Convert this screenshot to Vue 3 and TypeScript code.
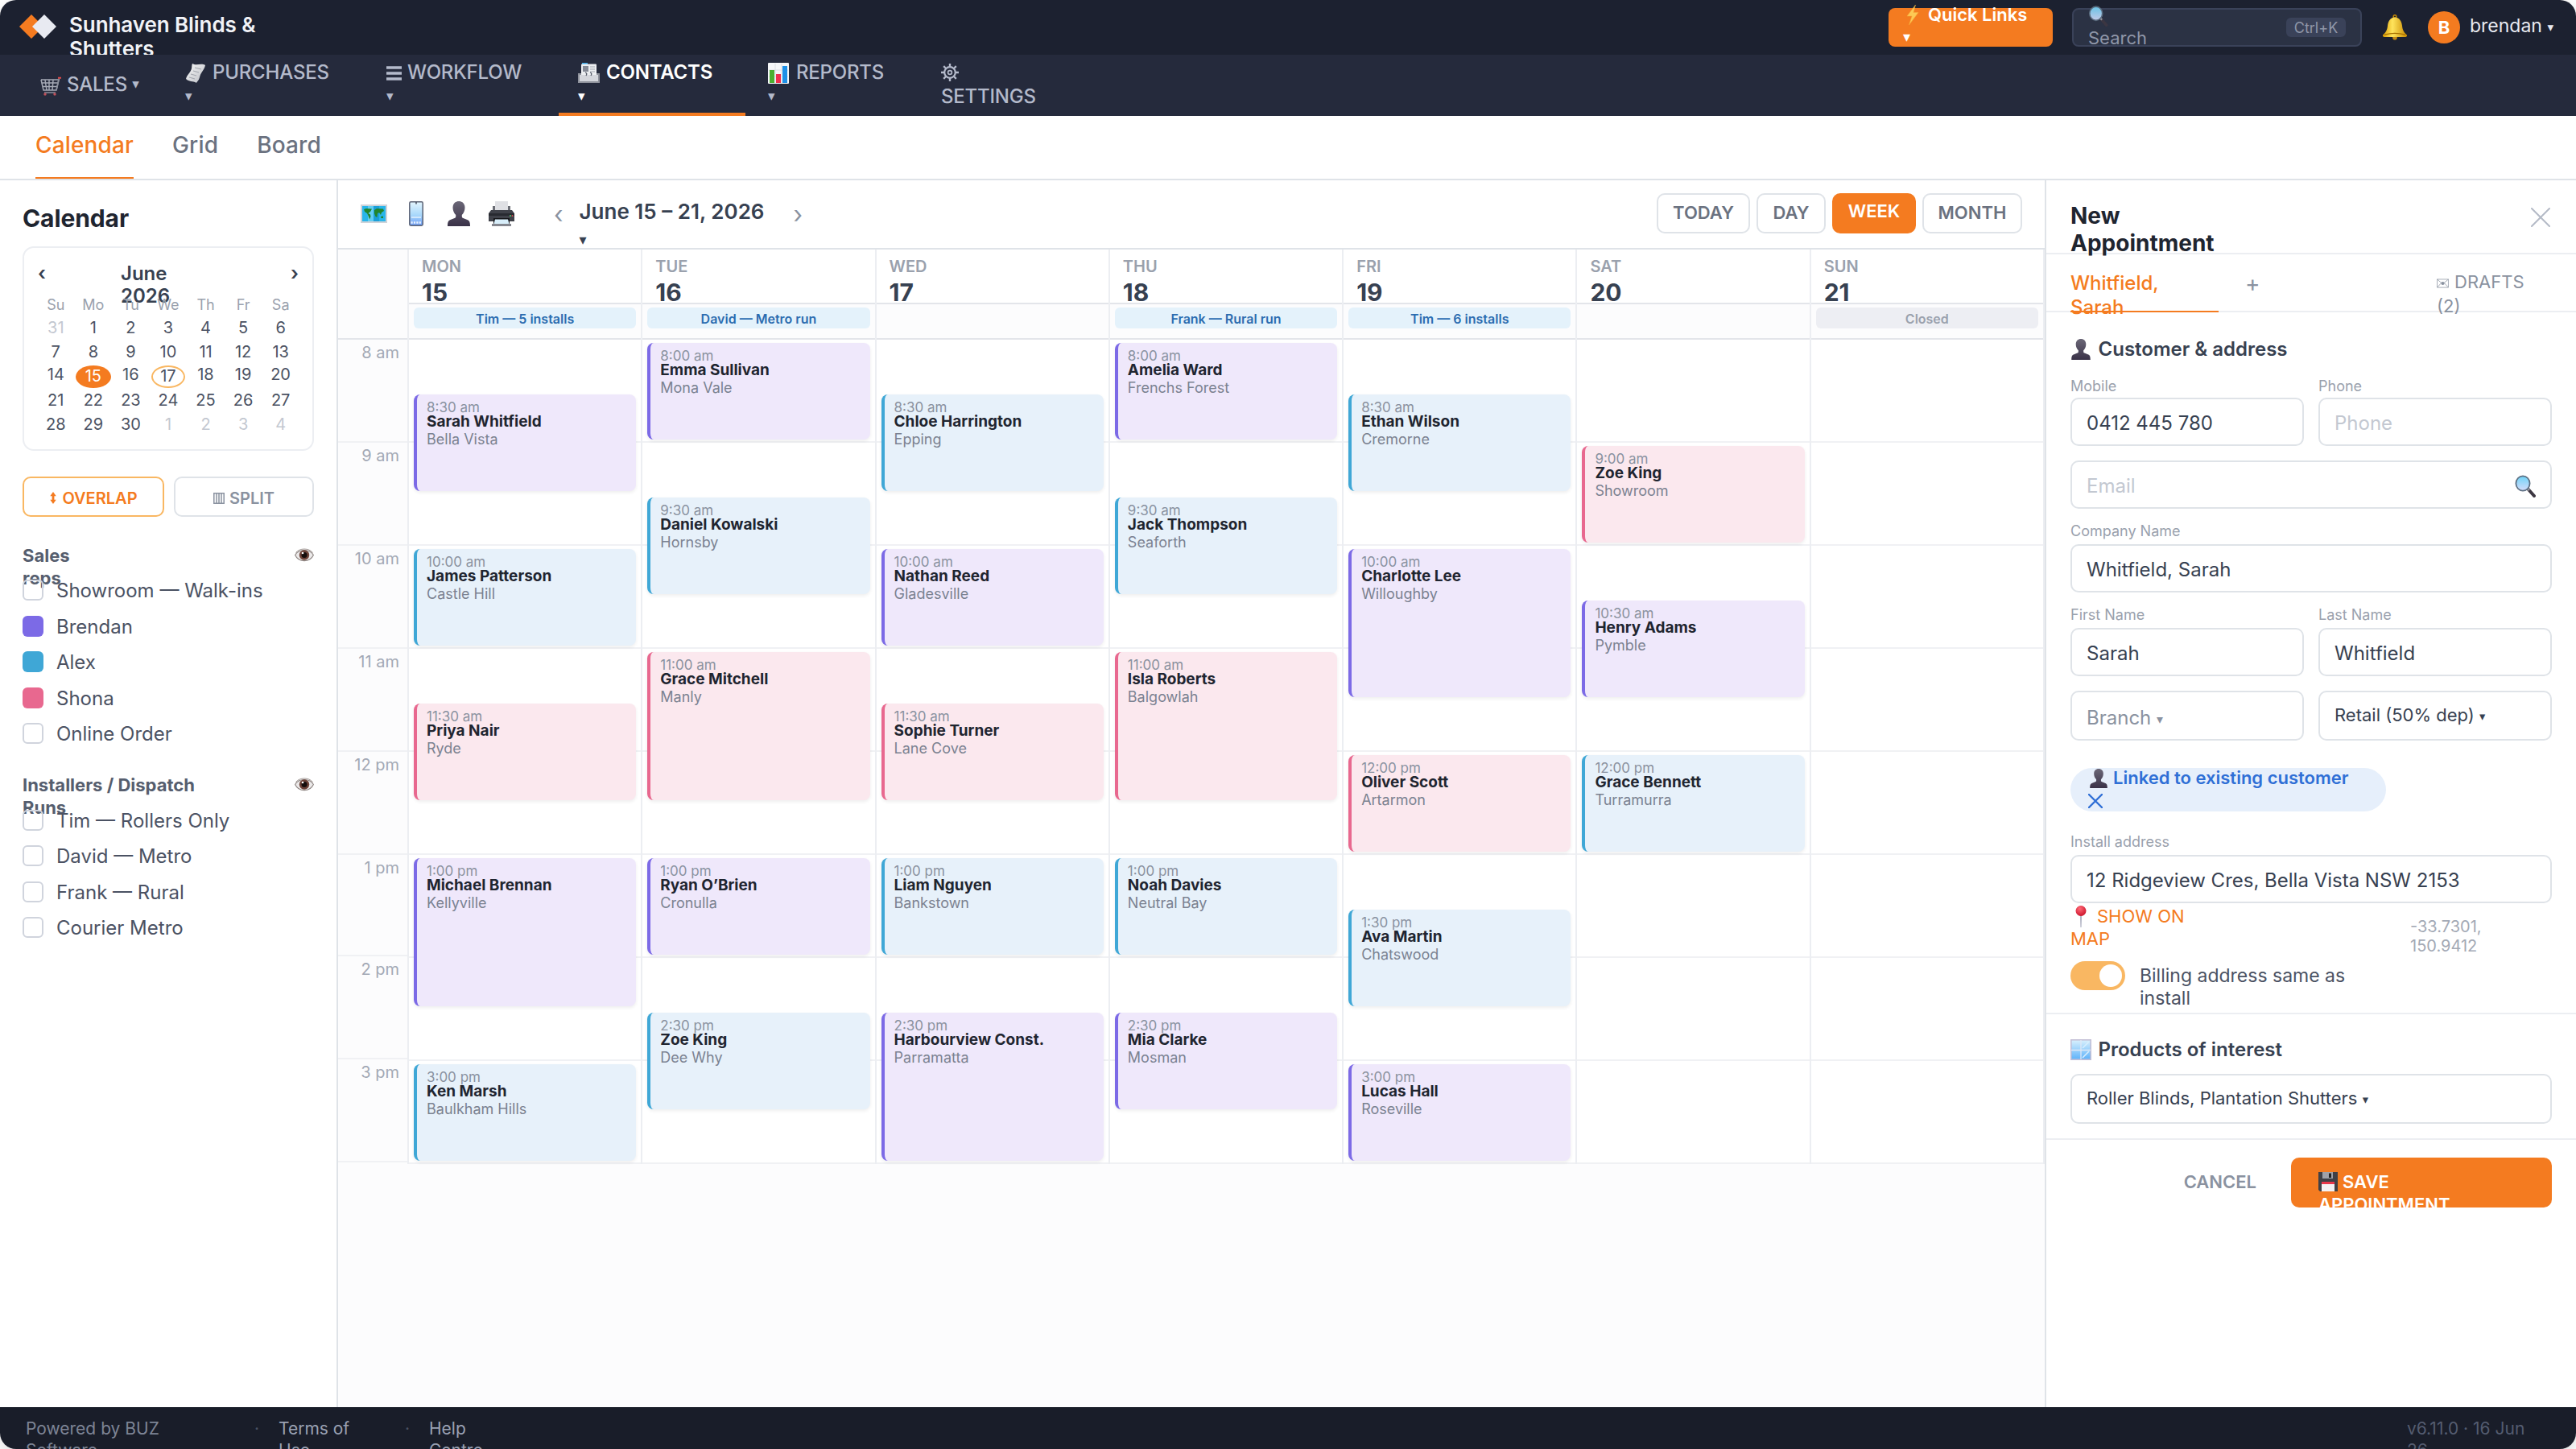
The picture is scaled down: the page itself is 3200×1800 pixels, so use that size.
<script setup lang="ts">
interface NavItem { key: string; icon: string; label: string; stacked?: boolean; active?: boolean }
interface Person { name: string; tone?: string }
interface Appt { start: number; hours: number; tone: string; name: string; place: string }
interface Day { dow: string; date: number; note?: string; closed?: boolean; appts: Appt[] }

const nav: NavItem[] = [
  { key: 'sales', icon: 'cart', label: 'SALES' },
  { key: 'purchases', icon: 'receipt', label: 'PURCHASES', stacked: true },
  { key: 'workflow', icon: 'menu', label: 'WORKFLOW', stacked: true },
  { key: 'contacts', icon: 'cards', label: 'CONTACTS', stacked: true, active: true },
  { key: 'reports', icon: 'chart', label: 'REPORTS', stacked: true },
  { key: 'settings', icon: 'gear', label: 'SETTINGS', stacked: true },
]

const weekdays = ['Su', 'Mo', 'Tu', 'We', 'Th', 'Fr', 'Sa']
const weeks: number[][] = [
  [31, 1, 2, 3, 4, 5, 6],
  [7, 8, 9, 10, 11, 12, 13],
  [14, 15, 16, 17, 18, 19, 20],
  [21, 22, 23, 24, 25, 26, 27],
  [28, 29, 30, 1, 2, 3, 4],
]
const dayClass = (w: number, d: number) => ({
  muted: (w === 0 && d > 20) || (w === 4 && d < 10),
  selected: d === 15,
  today: d === 17,
})

const reps: Person[] = [
  { name: 'Showroom — Walk-ins' },
  { name: 'Brendan', tone: 'purple' },
  { name: 'Alex', tone: 'blue' },
  { name: 'Shona', tone: 'pink' },
  { name: 'Online Order' },
]
const runs: Person[] = [
  { name: 'Tim — Rollers Only' },
  { name: 'David — Metro' },
  { name: 'Frank — Rural' },
  { name: 'Courier Metro' },
]

const hours = ['8 am', '9 am', '10 am', '11 am', '12 pm', '1 pm', '2 pm', '3 pm']
const a = (start: number, hours: number, tone: string, name: string, place: string): Appt => ({ start, hours, tone, name, place })
const days: Day[] = [
  { dow: 'MON', date: 15, note: 'Tim — 5 installs', appts: [
    a(8.5, 1, 'purple', 'Sarah Whitfield', 'Bella Vista'),
    a(10, 1, 'blue', 'James Patterson', 'Castle Hill'),
    a(11.5, 1, 'pink', 'Priya Nair', 'Ryde'),
    a(13, 1.5, 'purple', 'Michael Brennan', 'Kellyville'),
    a(15, 1, 'blue', 'Ken Marsh', 'Baulkham Hills'),
  ] },
  { dow: 'TUE', date: 16, note: 'David — Metro run', appts: [
    a(8, 1, 'purple', 'Emma Sullivan', 'Mona Vale'),
    a(9.5, 1, 'blue', 'Daniel Kowalski', 'Hornsby'),
    a(11, 1.5, 'pink', 'Grace Mitchell', 'Manly'),
    a(13, 1, 'purple', 'Ryan O’Brien', 'Cronulla'),
    a(14.5, 1, 'blue', 'Zoe King', 'Dee Why'),
  ] },
  { dow: 'WED', date: 17, appts: [
    a(8.5, 1, 'blue', 'Chloe Harrington', 'Epping'),
    a(10, 1, 'purple', 'Nathan Reed', 'Gladesville'),
    a(11.5, 1, 'pink', 'Sophie Turner', 'Lane Cove'),
    a(13, 1, 'blue', 'Liam Nguyen', 'Bankstown'),
    a(14.5, 1.5, 'purple', 'Harbourview Const.', 'Parramatta'),
  ] },
  { dow: 'THU', date: 18, note: 'Frank — Rural run', appts: [
    a(8, 1, 'purple', 'Amelia Ward', 'Frenchs Forest'),
    a(9.5, 1, 'blue', 'Jack Thompson', 'Seaforth'),
    a(11, 1.5, 'pink', 'Isla Roberts', 'Balgowlah'),
    a(13, 1, 'blue', 'Noah Davies', 'Neutral Bay'),
    a(14.5, 1, 'purple', 'Mia Clarke', 'Mosman'),
  ] },
  { dow: 'FRI', date: 19, note: 'Tim — 6 installs', appts: [
    a(8.5, 1, 'blue', 'Ethan Wilson', 'Cremorne'),
    a(10, 1.5, 'purple', 'Charlotte Lee', 'Willoughby'),
    a(12, 1, 'pink', 'Oliver Scott', 'Artarmon'),
    a(13.5, 1, 'blue', 'Ava Martin', 'Chatswood'),
    a(15, 1, 'purple', 'Lucas Hall', 'Roseville'),
  ] },
  { dow: 'SAT', date: 20, appts: [
    a(9, 1, 'pink', 'Zoe King', 'Showroom'),
    a(10.5, 1, 'purple', 'Henry Adams', 'Pymble'),
    a(12, 1, 'blue', 'Grace Bennett', 'Turramurra'),
  ] },
  { dow: 'SUN', date: 21, note: 'Closed', closed: true, appts: [] },
]

const HOUR = 128
const place = (e: Appt) => ({ top: `${(e.start - 8) * HOUR + 4}px`, height: `${e.hours * HOUR - 8}px` })
const clock = (t: number) => {
  const h = Math.floor(t)
  return `${h > 12 ? h - 12 : h}:${t % 1 ? '30' : '00'} ${h < 12 ? 'am' : 'pm'}`
}
</script>

<template>
  <div class="app">
    <svg class="sprite" width="0" height="0">
      <defs>
        <linearGradient id="g-bust" x1="0" y1="0" x2="0" y2="1"><stop offset="0" stop-color="#6b6777" /><stop offset="1" stop-color="#3a3248" /></linearGradient>
        <linearGradient id="g-phone" x1="0" y1="0" x2="0" y2="1"><stop offset="0" stop-color="#e4f6fe" /><stop offset=".55" stop-color="#a9d8fb" /><stop offset="1" stop-color="#6f9df5" /></linearGradient>
        <linearGradient id="g-gold" x1="0" y1="0" x2="1" y2="0"><stop offset="0" stop-color="#d99a00" /><stop offset=".4" stop-color="#ffe45c" /><stop offset="1" stop-color="#c98a00" /></linearGradient>
        <linearGradient id="g-lens" x1="0" y1="0" x2="0" y2="1"><stop offset="0" stop-color="#6fd3f7" /><stop offset="1" stop-color="#d5dcfb" /></linearGradient>
        <linearGradient id="g-glass" x1="0" y1="0" x2="0" y2="1"><stop offset="0" stop-color="#d9f1fd" /><stop offset="1" stop-color="#5eb2fa" /></linearGradient>
        <linearGradient id="g-paper" x1="0" y1="0" x2="1" y2="1"><stop offset="0" stop-color="#fafafa" /><stop offset="1" stop-color="#b9bbc2" /></linearGradient>
        <radialGradient id="g-ball" cx=".4" cy=".3" r=".8"><stop offset="0" stop-color="#ff6a78" /><stop offset="1" stop-color="#c60a22" /></radialGradient>
      </defs>
      <symbol id="cart" viewBox="0 0 26 24">
        <path d="M1 4 4 17H20L23 3.500M2 8H22M3 12.500H21M6 4.500 8 17M11 4.500V17M16 4.500 15 17M1 4H22" fill="none" stroke="#a4a8b4" stroke-width="1.500" />
        <path d="M20 17 23.500 2.500" fill="none" stroke="#8c909d" stroke-width="1.600" /><path d="M22 1.800H26" stroke="#e04a4a" stroke-width="2" />
        <path d="M5 20H19" stroke="#8c909d" stroke-width="1.500" /><circle cx="6" cy="22" r="1.700" fill="#c0505a" /><circle cx="18" cy="22" r="1.700" fill="#c0505a" />
      </symbol>
      <symbol id="receipt" viewBox="0 0 26 26">
        <path d="M9 1C14 4 20 0 25 3 24 9 19 12 18 18 17 22 15 23 14 25 9 22 5 24 1 20 2 15 7 12 8 7 8.500 5 8 3 9 1Z" fill="url(#g-paper)" />
        <path d="M12 6 20 8M10 10 17 12M7 14 14 16M5 18 12 20" stroke="#a3a6ae" stroke-width="1.100" />
      </symbol>
      <symbol id="menu" viewBox="0 0 20 26"><path d="M0 6H19M0 13H19M0 20H19" stroke="currentColor" stroke-width="3.400" /></symbol>
      <symbol id="cards" viewBox="0 0 27 26">
        <path d="M5 0H12V3H5Z" fill="#3ea8e6" /><rect x="4" y="1.500" width="19" height="21" rx="1" fill="#eceef1" />
        <rect x="6" y="4" width="7" height="7" fill="#858a96" /><path d="M15 5H21M15 8H21M15 11H21" stroke="#a2a6b0" stroke-width="1.200" />
        <path d="M0 13H4V22H23V13H27V25H0Z" fill="#8f929c" /><rect x="2" y="15" width="23" height="8" fill="#d4d6dc" />
        <path d="M9 12q3 1 1 4M15 12q3 1 1 4" fill="none" stroke="#555a68" stroke-width="1.300" />
      </symbol>
      <symbol id="chart" viewBox="0 0 26 26">
        <rect width="26" height="26" rx="1" fill="#f5f6f8" /><path d="M9 1V25M17 1V25M1 9H25M1 17H25" stroke="#dcdfe4" />
        <rect x="2" y="9" width="6" height="16" fill="#4caf2f" /><rect x="10" y="14" width="6" height="11" fill="#f0304f" /><rect x="18" y="4" width="6" height="21" fill="#1e90e8" />
      </symbol>
      <symbol id="gear" viewBox="0 0 22 22">
        <circle cx="11" cy="11" r="6.800" fill="none" stroke="currentColor" stroke-width="2.200" /><circle cx="11" cy="11" r="2.400" fill="none" stroke="currentColor" stroke-width="1.700" />
        <path d="M11 0V4M11 18V22M0 11H4M18 11H22M3.200 3.200 6 6M16 16 18.800 18.800M18.800 3.200 16 6M6 16 3.200 18.800" stroke="currentColor" stroke-width="2.400" />
      </symbol>
      <symbol id="bolt" viewBox="0 0 16 25"><path d="M11.500 0 1 14H7L3.500 25 15 9.500H9Z" fill="#ffd65e" stroke="#f9b23c" stroke-width=".6" /></symbol>
      <symbol id="mag" viewBox="0 0 26 28">
        <path d="M16 17 24 26" stroke="#3d3742" stroke-width="4" stroke-linecap="round" /><path d="M14.500 15.500 18 19" stroke="#9a9da6" stroke-width="2.500" />
        <ellipse cx="10" cy="10.500" rx="8.600" ry="9.200" fill="url(#g-lens)" stroke="#5d6f82" stroke-width="1.800" />
      </symbol>
      <symbol id="bell" viewBox="0 0 32 32">
        <circle cx="16" cy="2.600" r="1.800" fill="none" stroke="#c98a00" stroke-width="1.500" /><circle cx="16" cy="28.800" r="2.800" fill="#c58a12" />
        <path d="M16 3.500C22 3.500 24.500 9 25 14 25.500 19 27 22 31 25.500 31.500 27.500 30 28 28 28H4C2 28 .5 27.500 1 25.500 5 22 6.500 19 7 14 7.500 9 10 3.500 16 3.500Z" fill="url(#g-gold)" />
        <path d="M3 25.200Q16 21.500 29 25.200" fill="none" stroke="#a87200" stroke-width="1.200" />
      </symbol>
      <symbol id="map" viewBox="0 0 33 23">
        <rect width="33" height="23" fill="#cfd3d9" /><rect x="2" y="2" width="29" height="19" fill="#29b5ea" /><path d="M9 2H16V21H9Z" fill="#63cdf3" /><path d="M16 2H23V21H16Z" fill="#1b9fd8" />
        <path d="M4 6 7 5 14 5.500 12 9 9.500 11 12 12.500 12.500 15 11 18.500 9.500 14 8 11 5 9ZM17 7 20 5 28 5.500 29 8 26 10 25 13 23 10 21 11 20.500 16 18.500 15 17 11ZM25 15 28 14.500 28 17 25.500 17Z" fill="#22852c" />
      </symbol>
      <symbol id="phone" viewBox="0 0 18 31">
        <rect x=".8" y=".8" width="16.400" height="29.400" rx="1.600" fill="url(#g-phone)" stroke="#5b6274" stroke-width="1.500" /><path d="M9 1V3.500" stroke="#434a5a" stroke-width="1.500" />
        <path d="M3 20H15" stroke="#e2f0fd" stroke-width="1.500" /><path d="M2.500 26.500H15.500" stroke="#e9f2fe" stroke-width="2.400" stroke-dasharray="2.200 1.200" />
      </symbol>
      <symbol id="bust" viewBox="0 0 28 31">
        <path d="M14 0C18.500 0 21.500 3 21.500 8 21.500 11.500 20 15 17.800 17V19C17.800 20 18.400 20.600 19.400 21L25 23.200C27.200 24.200 28 26 28 31H0C0 26 .8 24.200 3 23.200L8.600 21C9.600 20.600 10.200 20 10.200 19V17C8 15 6.500 11.500 6.500 8 6.500 3 9.500 0 14 0Z" fill="url(#g-bust)" />
      </symbol>
      <symbol id="printer" viewBox="0 0 32 31">
        <path d="M8 0H24V12H8Z" fill="#dfe0e4" /><path d="M5 6H8V13H5ZM24 6H27V13H24Z" fill="#6b6d75" /><path d="M3 11H29L32 15V25H0V15Z" fill="#3f4149" /><path d="M0 15H32V18H0Z" fill="#282a31" />
        <path d="M6 21H26V28H6Z" fill="#15161a" /><path d="M8 22.500H24L25.500 28H6.500Z" fill="#d8eefa" /><path d="M4 28H28V31H4Z" fill="#85878f" /><circle cx="27" cy="18" r="1" fill="#4fd06a" /><circle cx="29.500" cy="18" r="1" fill="#e05050" />
      </symbol>
      <symbol id="eye" viewBox="0 0 24 18">
        <path d="M.6 9.500C5 1.500 19 1.500 23.400 9.500 19 19 5 19 .6 9.500Z" fill="#eceaea" stroke="#8d8582" stroke-width="1.100" /><path d="M1.500 6.500C6 .5 18 .5 22.500 6.500" fill="none" stroke="#a39b98" stroke-width="1" />
        <circle cx="12" cy="9.500" r="6.200" fill="#6d4238" /><circle cx="12" cy="9.500" r="3.500" fill="#140c0b" /><circle cx="10" cy="7" r="1.300" fill="#fff" />
      </symbol>
      <symbol id="updown" viewBox="0 0 8 16"><path d="M4 0 8 5.500H5.500V10.500H8L4 16 0 10.500H2.500V5.500H0Z" fill="currentColor" /></symbol>
      <symbol id="split" viewBox="0 0 14 14"><path d="M.8 .8H13.200V13.200H.8ZM4 1V13M7 1V13M10 1V13" fill="none" stroke="currentColor" stroke-width="1.500" /></symbol>
      <symbol id="env" viewBox="0 0 16 12"><path d="M.6 .6H15.400V11.400H.6ZM.6 .6 8 7 15.400 .6M.6 11.400 6 5.500M15.400 11.400 10 5.500" fill="none" stroke="currentColor" stroke-width=".8" /><circle cx="8" cy="6" r="2.200" fill="currentColor" /></symbol>
      <symbol id="pin" viewBox="0 0 14 27"><path d="M5.800 11H8.200L7.600 27H6.400Z" fill="#b4b6c6" /><circle cx="7" cy="6.500" r="6.500" fill="url(#g-ball)" /></symbol>
      <symbol id="window" viewBox="0 0 26 26"><rect x=".8" y=".8" width="24.400" height="24.400" fill="url(#g-glass)" stroke="#c3bfd6" stroke-width="1.600" /><path d="M13 1V25M1 13.500H25" stroke="#dfe8f6" stroke-width="1.300" /><path d="M15 11 23 3M15 23 23 15" stroke="#d8effd" stroke-width="1.600" /></symbol>
      <symbol id="floppy" viewBox="0 0 24 24"><path d="M0 0H24V24H2L0 22Z" fill="#3f4046" /><rect x="5" y="0" width="13" height="8" fill="#9fa1a8" /><rect x="13" y="1.500" width="3" height="5.500" fill="#222" /><rect x="4" y="12" width="16" height="12" fill="#f3f1f3" /><rect x="4" y="12" width="16" height="3" fill="#e8374b" /></symbol>
    </svg>

    <header class="topbar">
      <svg class="logo" width="46" height="30" viewBox="0 0 46 30">
        <path d="M15 0 30 15 15 30 0 15Z" fill="#f47b20" />
        <path d="M31 0 46 15 31 30 16 15Z" fill="#e8eaf1" />
      </svg>
      <div class="brand">Sunhaven Blinds &amp;<br>Shutters</div>
      <div class="spacer"></div>
      <div class="quick">
        <span class="ql"><svg class="bolt"><use href="#bolt" /></svg>Quick Links</span>
        <span class="qc">▾</span>
      </div>
      <div class="search">
        <div class="search-text"><svg class="mag"><use href="#mag" /></svg><span>Search</span></div>
        <kbd>Ctrl+K</kbd>
      </div>
      <svg class="bell"><use href="#bell" /></svg>
      <div class="avatar">B</div>
      <div class="user">brendan <span class="car">▾</span></div>
    </header>

    <nav class="mainnav">
      <div v-for="n in nav" :key="n.key" class="nav-item" :class="[n.key, { active: n.active }]">
        <div>
          <svg class="ico" :class="n.icon"><use :href="'#' + n.icon" /></svg><br v-if="n.key === 'settings'">{{ n.label }}<template v-if="n.key !== 'settings'"><br v-if="n.stacked"><template v-else>&nbsp;</template><span class="car">▾</span></template>
        </div>
      </div>
    </nav>

    <div class="tabs">
      <div class="tab on">Calendar</div>
      <div class="tab">Grid</div>
      <div class="tab">Board</div>
    </div>

    <div class="body">
      <aside class="side">
        <h2>Calendar</h2>
        <div class="mini">
          <div class="mini-head">
            <span class="prev-m">‹</span>
            <span class="month">June<br>2026</span>
            <span class="next-m">›</span>
          </div>
          <div class="mini-row dows"><span v-for="d in weekdays" :key="d">{{ d }}</span></div>
          <div v-for="(w, i) in weeks" :key="i" class="mini-row" :class="'w' + i">
            <span v-for="d in w" :key="d" :class="dayClass(i, d)">{{ d }}</span>
          </div>
        </div>
        <div class="modes">
          <div class="mode on"><svg width="8" height="15"><use href="#updown" /></svg>OVERLAP</div>
          <div class="mode off"><svg width="14" height="14"><use href="#split" /></svg>SPLIT</div>
        </div>
        <div class="group-head"><span>Sales<br>reps</span><svg class="eye"><use href="#eye" /></svg></div>
        <div class="people">
          <div v-for="p in reps" :key="p.name" class="person"><i class="box" :class="p.tone"></i><span>{{ p.name }}</span></div>
        </div>
        <div class="group-head second"><span>Installers / Dispatch<br>Runs</span><svg class="eye"><use href="#eye" /></svg></div>
        <div class="people">
          <div v-for="p in runs" :key="p.name" class="person"><i class="box"></i><span>{{ p.name }}</span></div>
        </div>
      </aside>

      <main class="cal">
        <div class="toolbar">
          <div class="tools">
            <span><svg width="33" height="23"><use href="#map" /></svg></span>
            <span><svg width="18" height="31"><use href="#phone" /></svg></span>
            <span><svg width="28" height="31"><use href="#bust" /></svg></span>
            <span><svg width="32" height="31"><use href="#printer" /></svg></span>
          </div>
          <span class="arrow prev">‹</span>
          <div class="range">June 15 – 21, 2026<span class="car">▾</span></div>
          <span class="arrow">›</span>
          <div class="spacer"></div>
          <div class="views">
            <div class="view today-btn">TODAY</div>
            <div class="view day-btn">DAY</div>
            <div class="view week-btn">WEEK</div>
            <div class="view month-btn">MONTH</div>
          </div>
        </div>
        <div class="week">
          <div class="gutter">
            <div class="gutter-head"></div>
            <div v-for="(h, i) in hours" :key="h" class="hour" :class="{ short: i === 5 }">{{ h }}</div>
          </div>
          <div v-for="d in days" :key="d.date" class="day">
            <div class="day-head"><div class="dow">{{ d.dow }}</div><div class="date">{{ d.date }}</div></div>
            <div class="allday"><div v-if="d.note" class="note" :class="{ closed: d.closed }">{{ d.note }}</div></div>
            <div class="lane">
              <div v-for="h in hours" :key="h" class="slot"></div>
              <div v-for="e in d.appts" :key="e.start" class="appt" :class="e.tone" :style="place(e)">
                <div class="t">{{ clock(e.start) }}</div>
                <div class="n">{{ e.name }}</div>
                <div class="p">{{ e.place }}</div>
              </div>
            </div>
          </div>
        </div>
      </main>

      <section class="panel">
        <div class="p-head">
          <h2>New<br>Appointment</h2>
          <svg class="close" width="24" height="24" viewBox="0 0 24 24"><path d="M1 1 23 23M23 1 1 23" stroke="#b4bac6" stroke-width="2" stroke-linecap="round" /></svg>
        </div>
        <div class="p-tabs">
          <div class="p-tab">Whitfield,<br>Sarah</div>
          <div class="plus">+</div>
          <div class="drafts"><svg class="env"><use href="#env" /></svg>DRAFTS<br>(2)</div>
        </div>
        <div class="form">
          <h3><svg class="hi bustico"><use href="#bust" /></svg>Customer &amp; address</h3>
          <div class="pair first">
            <div><label>Mobile</label><div class="input">0412 445 780</div></div>
            <div><label>Phone</label><div class="input ph">Phone</div></div>
          </div>
          <div class="input ph email"><span>Email</span><svg width="26" height="28"><use href="#mag" /></svg></div>
          <div class="field"><label>Company Name</label><div class="input">Whitfield, Sarah</div></div>
          <div class="pair">
            <div><label>First Name</label><div class="input">Sarah</div></div>
            <div><label>Last Name</label><div class="input">Whitfield</div></div>
          </div>
          <div class="pair selects">
            <div class="select branch">Branch <span class="car">▾</span></div>
            <div class="select">Retail (50% dep) <span class="car">▾</span></div>
          </div>
          <div class="chip">
            <div class="chip-line"><svg class="chip-bust"><use href="#bust" /></svg>Linked to existing customer</div>
            <svg class="x" width="18" height="18" viewBox="0 0 18 18"><path d="M1 1 17 17M17 1 1 17" stroke="#2f6fd6" stroke-width="2.400" stroke-linecap="round" /></svg>
          </div>
          <label class="addr">Install address</label>
          <div class="input">12 Ridgeview Cres, Bella Vista NSW 2153</div>
          <div class="maprow">
            <div class="showmap"><svg class="pin"><use href="#pin" /></svg>SHOW ON<br>MAP</div>
            <div class="coords">-33.7301,<br>150.9412</div>
          </div>
          <div class="billing">
            <div class="toggle"><i></i></div>
            <div>Billing address same as<br>install</div>
          </div>
        </div>
        <div class="products">
          <h3><svg class="hi"><use href="#window" /></svg>Products of interest</h3>
          <div class="select">Roller Blinds, Plantation Shutters <span class="car">▾</span></div>
        </div>
        <div class="actions">
          <div class="cancel">CANCEL</div>
          <div class="save"><svg class="floppy"><use href="#floppy" /></svg>SAVE<br>APPOINTMENT</div>
        </div>
      </section>
    </div>

    <footer class="foot">
      <span class="f1">Powered by BUZ<br>Software</span>
      <span class="dot">·</span>
      <span class="f2">Terms of<br>Use</span>
      <span class="dot">·</span>
      <span class="f3">Help<br>Centre</span>
      <span class="ver">v6.11.0 · 16 Jun<br>26</span>
    </footer>
  </div>
</template>

<style>
html { overflow: hidden; }
body { background: #fff; }
</style>

<style scoped>
* { box-sizing: border-box; }
h2, h3 { margin: 0; }
i { font-style: normal; }
.sprite { position: absolute; }
.app {
  width: 3200px; height: 1800px; overflow: hidden; border-radius: 20px; box-shadow: 0 8px 24px rgba(0, 0, 0, 0.14);
  display: flex; flex-direction: column; background: #fff;
  font-family: Inter, "DejaVu Sans", sans-serif; font-size: 24px; color: #3b4252; white-space: nowrap;
}
.spacer { flex: 1; }
.car { font-size: 0.66em; line-height: 1; vertical-align: 1px; }

.topbar { height: 68px; background: #1c2130; display: flex; overflow: hidden; flex: none; }
.logo { margin: 18px 0 0 24px; flex: none; }
.brand { margin: 16px 0 0 16px; font-weight: 600; font-size: 26px; letter-spacing: -0.08px; line-height: 30px; color: #f1f3f7; }
.quick { width: 204px; height: 48px; margin-top: 10px; background: #f47b20; border-radius: 8px; color: #fff; font-weight: 600; font-size: 22px; line-height: 28px; padding-left: 18px; display: flex; flex-direction: column; }
.ql { margin-top: -6px; }
.bolt { width: 16px; height: 25px; vertical-align: -5px; margin: 0 11px 0 4px; opacity: 0.85; }
.qc { font-size: 18px; }
.search { width: 360px; height: 48px; margin: 10px 0 0 24px; background: #2b3244; border: 2px solid #3a4259; border-radius: 8px; display: flex; justify-content: space-between; padding: 0 18px; color: #8f96a8; }
.search-text { display: flex; flex-direction: column; font-size: 22px; line-height: 28px; margin-top: -5px; }
.mag { width: 25px; height: 26px; flex: none; opacity: 0.9; }
kbd { margin-top: 10px; width: 74px; height: 24px; background: #3a4259; border-radius: 6px; font: 18px/25px Inter, sans-serif; text-align: center; }
.bell { width: 32px; height: 32px; margin: 18px 0 0 25px; }
.avatar { width: 40px; height: 40px; margin: 14px 0 0 25px; border-radius: 50%; background: #f47b20; color: #fff; font-weight: 700; font-size: 22px; line-height: 40px; text-align: center; }
.user { margin: 12px 0 0 12px; width: 132px; line-height: 40px; font-size: 23px; color: #e8eaf1; }

.mainnav { height: 76px; background: #252a3c; display: flex; flex: none; padding-left: 24px; gap: 4px; font-size: 24px; letter-spacing: -0.2px; font-weight: 500; color: #b4bacb; line-height: 30px; }
.mainnav .car { font-size: 17px; vertical-align: 3px; }
.nav-item { display: flex; align-items: center; padding: 2px 0 0 24px; border-bottom: 4px solid transparent; }
.nav-item.active { color: #fff; font-weight: 600; border-color: #f47b20; }
.ico { width: 26px; height: 26px; vertical-align: -6px; margin-right: 8px; }
.ico.cart { height: 24px; margin-left: 2px; margin-right: 7px; }
.ico.menu { width: 20px; margin-right: 6px; }
.ico.cards { width: 27px; margin-right: 8px; }
.ico.chart { margin-right: 9px; }
.ico.gear { width: 22px; height: 22px; vertical-align: -3px; }
.sales { width: 178px; }
.purchases { width: 246px; }
.workflow { width: 234px; }
.contacts { width: 232px; }
.reports { width: 211px; }

.tabs { height: 80px; border-bottom: 2px solid #dfe3e8; display: flex; gap: 48px; padding-left: 44px; flex: none; font-size: 28px; letter-spacing: 0.15px; font-weight: 500; color: #6b7280; line-height: 72px; }
.tab { height: 78px; }
.tab.on { color: #f47b20; border-bottom: 2px solid #f47b20; }

.body { height: 1524px; display: flex; flex: none; }
.side { width: 420px; border-right: 2px solid #dfe3e8; padding: 0 28px; flex: none; }
.side h2 { font-size: 30px; line-height: 40px; font-weight: 700; color: #1f2530; margin-top: 27px; letter-spacing: -0.1px; }
.mini { margin-top: 15px; height: 254px; border: 2px solid #eceef2; border-radius: 14px; padding: 16px; }
.mini-head { display: flex; height: 42px; line-height: 28px; font-size: 24px; font-weight: 600; color: #374151; padding: 2px 1px 0; }
.prev-m { width: 103px; }
.next-m { margin-left: auto; }
.mini-row { display: flex; height: 30px; line-height: 30px; font-size: 20px; color: #4b5263; }
.mini-row span { width: 46.57px; text-align: center; }
.mini-row.dows { font-size: 18px; height: 26px; line-height: 26px; color: #9aa1ad; }
.mini-row.w2 { line-height: 27px; }
.mini-row .muted { color: #c3c8d1; }
.mini-row .selected { background: #f47b20; color: #fff; border-radius: 50%; height: 28px; width: 44px; margin: 2px 1.28px 0; line-height: 27px; }
.mini-row .today { border: 2px solid #f9b762; border-radius: 50%; height: 28px; width: 42px; margin: 2px 2.28px 0; line-height: 23px; }
.modes { display: flex; gap: 12px; margin-top: 32px; }
.mode { width: 176px; height: 50px; border: 2px solid #dfe3e8; border-radius: 10px; display: flex; justify-content: center; align-items: center; gap: 6px; padding-top: 3px; font-size: 20px; font-weight: 600; color: #8a92a0; }
.mode.on { border-color: #f9b762; color: #f47b20; gap: 7px; padding-left: 1px; }
.mode.off { width: 174px; }
.group-head { display: flex; justify-content: space-between; height: 44px; margin-top: 34px; font-size: 22px; line-height: 28px; font-weight: 700; color: #565e6e; }
.group-head.second { margin-top: 37px; height: 44.6px; }
.eye { width: 24px; height: 18px; margin-top: 4px; }
.people { color: #4b5263; font-size: 24px; }
.person { display: flex; align-items: center; height: 26px; margin-bottom: 18.5px; }
.person span { padding-top: 1px; }
.person:last-child { margin-bottom: 0; }
.box { width: 26px; height: 26px; border: 2px solid #d0d4dd; border-radius: 6px; margin-right: 16px; background: transparent; }
.box.purple { background: #7c6ae6; border: 0; }
.box.blue { background: #3fa7d6; border: 0; }
.box.pink { background: #e8688f; border: 0; }

.cal { width: 2120px; flex: none; background: #fcfcfd; }
.toolbar { height: 86px; background: #fff; border-bottom: 2px solid #dfe3e8; display: flex; padding: 0 28px; }
.tools { display: flex; gap: 17.8px; height: 82px; margin-left: -1px; width: 193px; }
.tools span { width: 35px; display: flex; align-items: center; justify-content: center; }
.arrow { color: #8a92a0; font-size: 30px; line-height: 84px; }
.arrow.prev { margin-left: 48px; }
.range { margin: 19px 36px 0 20px; font-size: 26px; line-height: 40px; font-weight: 600; color: #374151; }
.range .car { display: block; font-size: 18px; line-height: 20px; margin-top: 5px; }
.views { display: flex; gap: 8px; margin-top: 16px; font-size: 22px; font-weight: 600; color: #6b7280; line-height: 45px; text-align: center; }
.view { height: 50px; border: 2px solid #dfe3e8; border-radius: 10px; }
.today-btn { width: 116px; }
.day-btn { width: 86px; }
.week-btn { width: 104px; background: #f47b20; border: 0; color: #fff; }
.month-btn { width: 124px; }

.week { display: flex; }
.gutter { width: 88px; border-right: 2px solid #eceef2; flex: none; height: 1136px; }
.gutter-head { height: 112px; border-bottom: 2px solid #e3e5ea; }
.hour { height: 128px; border-bottom: 2px solid #f0f1f4; text-align: right; padding-right: 10px; font-size: 20px; line-height: 32px; color: #a3a9b5; }
.hour.short { height: 126px; }
.day { flex: 1; background: #fff; border-right: 2px solid #eceef2; }
.day-head { height: 68px; border-bottom: 2px solid #e3e5ea; padding: 6px 0 0 16px; }
.dow { font-size: 20px; line-height: 30px; font-weight: 600; color: #9aa1ad; }
.date { font-size: 30px; line-height: 35px; font-weight: 700; color: #374151; }
.allday { height: 44px; border-bottom: 2px solid #e3e5ea; background: #fcfcfd; padding: 4px 6px; }
.note { height: 26px; border-radius: 6px; background: #e4f2fb; color: #2b6cb0; font-size: 16px; line-height: 28px; font-weight: 600; text-align: center; }
.note.closed { background: #edeef3; color: #9aa1ad; }
.lane { position: relative; }
.slot { height: 128px; border-bottom: 2px solid #f0f1f4; }
.appt { position: absolute; left: 6px; right: 6px; border-radius: 8px; border-left: 4px solid; padding: 8px 0 0 12px; box-shadow: 0 2px 4px rgba(0, 0, 0, 0.07); }
.appt.purple { background: #efe8fb; border-color: #7c6ae6; }
.appt.blue { background: #e7f1fa; border-color: #3fa7d6; }
.appt.pink { background: #fbe8ee; border-color: #e8688f; }
.t { font-size: 17px; line-height: 16px; color: #8a92a0; }
.n { font-size: 19px; line-height: 19px; font-weight: 700; color: #1f2530; }
.p { font-size: 18px; line-height: 26px; color: #7b8291; }

.panel { width: 660px; border-left: 2px solid #dfe3e8; flex: none; background: #fff; }
.p-head { height: 92px; border-bottom: 2px solid #eceef2; padding: 27px 32px 0 30px; display: flex; justify-content: space-between; }
.panel h2 { font-size: 28px; line-height: 34px; font-weight: 700; color: #1f2530; }
.close { margin-top: 7px; }
.p-tabs { height: 72px; border-bottom: 2px solid #eceef2; padding-left: 30px; display: flex; font-size: 24px; line-height: 30px; }
.p-tab { width: 184px; height: 72px; padding-top: 21px; color: #f47b20; font-weight: 500; border-bottom: 2px solid #f47b20; }
.plus { margin: 21px 0 0 33px; width: 20px; color: #8a92a0; font-size: 28px; }
.drafts { margin: 19px 0 0 218px; color: #8a92a0; font-size: 22px; }
.env { width: 15px; height: 12px; margin-right: 7px; }
.form { height: 872px; border-bottom: 2px solid #eceef2; padding: 26px 30px 0; }
h3 { font-size: 24px; line-height: 40px; font-weight: 600; color: #374151; }
.hi { width: 26px; height: 26px; vertical-align: -5px; margin-right: 8.5px; }
label { display: block; font-size: 18px; line-height: 24px; height: 26px; color: #9aa1ad; }
label.addr { height: 28px; }
.pair { display: flex; gap: 18px; }
.pair > div { flex: 1; }
.pair.first { margin-top: 14px; }
.input { height: 60px; border: 2px solid #dfe3e8; border-radius: 10px; padding-left: 18px; line-height: 60px; font-size: 24px; color: #374151; }
.input.ph { color: #c3c8d1; }
.email { margin-top: 18px; display: flex; justify-content: space-between; padding-right: 18px; }
.email svg { margin-top: 16px; }
.field { margin: 16px 0; }
.field label, .pair:not(.first) label { height: 28px; }
.select { height: 62px; border: 2px solid #dfe3e8; border-radius: 10px; padding-left: 18px; line-height: 57px; font-size: 22px; color: #374151; }
.select.branch { font-size: 24px; color: #8a92a0; line-height: 64px; }
.selects { margin-top: 18px; }
.chip { width: 392px; height: 54px; margin: 34px 0 26px; border-radius: 27px; background: #e6effb; color: #2f6fd6; font-weight: 600; font-size: 22px; line-height: 27px; padding-left: 22px; display: flex; flex-direction: column; }
.chip-line { margin-top: -1px; height: 27px; }
.chip-bust { width: 22px; height: 24px; vertical-align: -5px; margin: 0 7px 0 2px; }
.chip .x { margin-top: 6px; }
.maprow { display: flex; height: 58px; }
.showmap { width: 422px; color: #f47b20; font-size: 22px; line-height: 28px; padding-top: 2px; }
.pin { width: 14px; height: 27px; vertical-align: -6px; margin: 0 13px 0 6px; }
.coords { color: #a3a9b5; font-size: 20px; line-height: 24px; padding-top: 17px; }
.billing { display: flex; line-height: 28px; font-size: 23px; color: #4b5263; margin-top: 14px; gap: 18px; }
.billing > div:last-child { margin-top: 4px; }
.toggle { width: 68px; height: 36px; border-radius: 18px; background: #f9b762; padding: 4px 4px 4px 36px; }
.toggle i { display: block; width: 28px; height: 28px; border-radius: 50%; background: #fff; }
.products { height: 156px; border-bottom: 2px solid #eceef2; padding: 24px 30px 0; }
.products .select { margin-top: 10px; }
.actions { display: flex; padding: 22px 30px 0; justify-content: flex-end; font-weight: 600; font-size: 22px; line-height: 28px; }
.cancel { color: #8a92a0; margin: 16px 43px 0 0; }
.save { width: 324px; height: 62px; background: #f47b20; border-radius: 10px; color: #fff; padding: 16px 0 0 34px; overflow: hidden; }
.floppy { width: 24px; height: 24px; vertical-align: -4px; margin-right: 6px; }

.foot { height: 52px; background: #191d29; display: flex; flex: none; overflow: hidden; font-size: 21px; line-height: 27px; padding: 13px 0 0 32px; color: #9aa1b3; }
.f1 { width: 284px; color: #7d8495; }
.dot { width: 30px; color: #4a5162; }
.f2 { width: 157px; }
.f3 { width: 200px; }
.ver { margin-left: auto; width: 210px; color: #545c70; }
</style>
